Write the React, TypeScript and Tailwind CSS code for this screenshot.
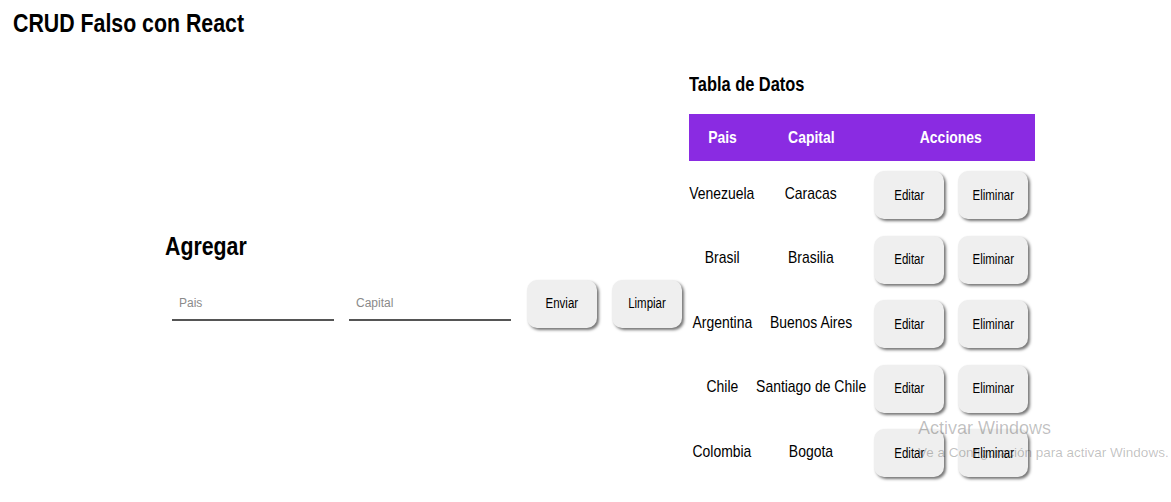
import React from "react";

const rows = [
  ["Venezuela", "Caracas"],
  ["Brasil", "Brasilia"],
  ["Argentina", "Buenos Aires"],
  ["Chile", "Santiago de Chile"],
  ["Colombia", "Bogota"],
];

function N({ children, left }: { children: React.ReactNode; left?: boolean }) {
  return (
    <span
      className={
        left
          ? "inline-block whitespace-nowrap origin-left scale-x-[0.82]"
          : "inline-block whitespace-nowrap origin-center scale-x-[0.82]"
      }
    >
      {children}
    </span>
  );
}

const btn =
  "w-[70px] h-[48px] shrink-0 rounded-[10px] bg-[#efefef] text-[14px] text-black shadow-[2px_2px_3px_rgba(0,0,0,0.55)] flex items-center justify-center";

function Cell({ children }: { children: React.ReactNode }) {
  return (
    <div className="flex justify-center items-center w-full">
      <N>{children}</N>
    </div>
  );
}

export default function App() {
  return (
    <div className="relative w-[1171px] h-[502px] overflow-hidden bg-white text-black font-['Liberation_Sans',Arial,sans-serif]">
      <h1 className="pl-[13px] pt-[8px] text-[26px] leading-[30px] font-bold">
        <N left>CRUD Falso con React</N>
      </h1>
      <div className="flex items-center pl-[165px] mt-[34px]">
        <div className="flex flex-col">
          <h2 className="text-[26px] leading-[30px] font-bold mt-[3px] mb-[19px]">
            <N left>Agregar</N>
          </h2>
          <div className="flex items-center h-[48px] pl-[7px]">
            <input
              placeholder="Pais"
              className="w-[162px] h-[34px] px-[7px] text-[12px] border-b-2 border-[#555] outline-none placeholder:text-[#8a8a8a]"
            />
            <input
              placeholder="Capital"
              className="w-[162px] h-[34px] ml-[15px] px-[7px] text-[12px] border-b-2 border-[#555] outline-none placeholder:text-[#8a8a8a]"
            />
            <button className={btn + " ml-[16px]"}>
              <N>Enviar</N>
            </button>
            <button className={btn + " ml-[15px]"}>
              <N>Limpiar</N>
            </button>
          </div>
        </div>
        <div className="flex flex-col ml-[7px]">
          <h2 className="text-[20px] leading-[24px] font-bold mb-[18px]">
            <N left>Tabla de Datos</N>
          </h2>
          <table className="table-fixed w-[346px] border-collapse text-[17px]">
            <thead>
              <tr className="bg-[#8a2be2] text-white h-[47px]">
                <th className="w-[66px] p-0 font-bold">
                  <Cell>Pais</Cell>
                </th>
                <th className="w-[112px] p-0 font-bold">
                  <Cell>Capital</Cell>
                </th>
                <th className="w-[168px] p-0 font-bold">
                  <Cell>Acciones</Cell>
                </th>
              </tr>
            </thead>
            <tbody>
              {rows.map(([p, c]) => (
                <tr key={p} className="h-[64.5px]">
                  <td className="p-0">
                    <Cell>{p}</Cell>
                  </td>
                  <td className="p-0">
                    <Cell>{c}</Cell>
                  </td>
                  <td className="p-0">
                    <div className="flex items-center pl-[7px] gap-[14px] pt-[4px]">
                      <button className={btn}>
                        <N>Editar</N>
                      </button>
                      <button className={btn}>
                        <N>Eliminar</N>
                      </button>
                    </div>
                  </td>
                </tr>
              ))}
            </tbody>
          </table>
        </div>
      </div>
      <div className="absolute left-[918px] top-[417px] text-black/25 pointer-events-none">
        <div className="text-[18px] leading-[22px]">Activar Windows</div>
        <div className="text-[13.5px] leading-[18px] mt-[5px]">Ve a Configuración para activar Windows.</div>
      </div>
    </div>
  );
}
